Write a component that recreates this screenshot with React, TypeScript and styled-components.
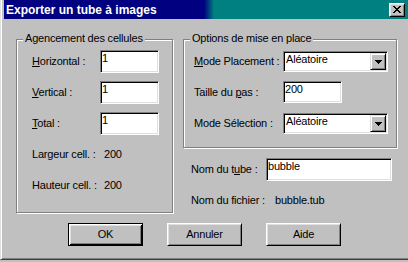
import styled, { createGlobalStyle } from "styled-components";

const GlobalStyle = createGlobalStyle`
  html, body {
    margin: 0;
    padding: 0;
    background: #c0c0c0;
    overflow: hidden;
  }
  body {
    font-family: "Liberation Sans", Arial, sans-serif;
    font-size: 11px;
    line-height: 13px;
    letter-spacing: -0.2px;
    color: #000;
  }
`;

const Window = styled.div`
  width: 408px;
  height: 260px;
  box-sizing: border-box;
  padding-left: 3px;
  background: #c0c0c0;
  border-left: 1px solid #dfdfdf;
  border-bottom: 1px solid #404040;
  box-shadow: inset 1px 0 0 #fff, inset 0 -1px 0 #808080;
`;

const TitleBar = styled.div`
  height: 19px;
  padding: 0 3px 0 2px;
  display: flex;
  align-items: center;
  justify-content: space-between;
  background: linear-gradient(
    90deg,
    #000080 0,
    #000080 200px,
    #004080 205px,
    #008080 210px
  );
`;

const TitleText = styled.span`
  padding-top: 1px;
  color: #fff;
  font-weight: bold;
  font-size: 12px;
  line-height: 14px;
  letter-spacing: 0;
`;

const CloseButton = styled.div`
  width: 16px;
  height: 14px;
  box-sizing: border-box;
  display: flex;
  align-items: center;
  justify-content: center;
  padding: 0 1px 1px 0;
  background: #c0c0c0;
  border: 1px solid;
  border-color: #fff #000 #000 #fff;
  box-shadow: inset 1px 1px 0 #dfdfdf, inset -1px -1px 0 #808080;
`;

const Body = styled.div`
  padding: 20px 0 0 12px;
`;

const Columns = styled.div`
  display: flex;
  align-items: flex-start;
  gap: 10px;
`;

const RightColumn = styled.div`
  display: flex;
  flex-direction: column;
`;

const GroupBox = styled.div<{ $w: number; $h: number }>`
  position: relative;
  box-sizing: border-box;
  width: ${(p) => p.$w}px;
  height: ${(p) => p.$h}px;
  border: 1px solid #808080;
  box-shadow: inset 1px 1px 0 #fff, 1px 1px 0 #fff;
`;

const Legend = styled.span`
  position: absolute;
  top: -8px;
  left: 6px;
  padding: 0 2px;
  background: #c0c0c0;
  white-space: nowrap;
`;

const FormGrid = styled.div<{ $cols: string; $pad: number }>`
  display: grid;
  grid-template-columns: ${(p) => p.$cols};
  grid-auto-rows: 23px;
  row-gap: 8px;
  padding: 10px 0 0 ${(p) => p.$pad}px;
`;

const Label = styled.span`
  display: flex;
  align-items: center;
  white-space: pre;
  padding-bottom: 1px;
`;

const Value = styled.span`
  display: flex;
  align-items: center;
  padding-left: 4px;
  padding-bottom: 1px;
`;

const Edit = styled.div<{ $w: number; $h?: number }>`
  box-sizing: border-box;
  width: ${(p) => p.$w}px;
  height: ${(p) => p.$h ?? 23}px;
  padding: 1px;
  background: #fff;
  border: 1px solid;
  border-color: #808080 #fff #fff #808080;
  box-shadow: inset 1px 1px 0 #000, inset -1px -1px 0 #dfdfdf;
  white-space: nowrap;
`;

const Combo = styled.div`
  box-sizing: border-box;
  width: 105px;
  height: 21px;
  align-self: center;
  display: flex;
  justify-content: space-between;
  padding: 1px;
  background: #fff;
  border: 1px solid;
  border-color: #808080 #fff #fff #808080;
  box-shadow: inset 1px 1px 0 #000, inset -1px -1px 0 #dfdfdf;
`;

const ComboText = styled.span`
  padding-left: 1px;
`;

const DropButton = styled.div`
  width: 16px;
  height: 17px;
  box-sizing: border-box;
  display: flex;
  align-items: center;
  justify-content: center;
  background: #c0c0c0;
  border: 1px solid;
  border-color: #dfdfdf #000 #000 #dfdfdf;
  box-shadow: inset 1px 1px 0 #fff, inset -1px -1px 0 #808080;
`;

const FieldRow = styled.div<{ $cols: string; $top: number }>`
  display: grid;
  grid-template-columns: ${(p) => p.$cols};
  height: 23px;
  margin-top: ${(p) => p.$top}px;
  padding-left: 8px;
`;

const PlainValue = styled.span`
  display: flex;
  align-items: center;
`;

const ButtonRow = styled.div`
  display: flex;
  gap: 24px;
  margin-top: 10px;
  padding-left: 52px;
`;

const Button = styled.div<{ $default?: boolean }>`
  width: 75px;
  height: 23px;
  box-sizing: border-box;
  display: flex;
  align-items: center;
  justify-content: center;
  background: #c0c0c0;
  border: 1px solid;
  border-color: ${(p) => (p.$default ? "#000" : "#fff #000 #000 #fff")};
  box-shadow: ${(p) =>
    p.$default
      ? "inset 1px 1px 0 #fff, inset -1px -1px 0 #000, inset 2px 2px 0 #dfdfdf, inset -2px -2px 0 #808080"
      : "inset 1px 1px 0 #dfdfdf, inset -1px -1px 0 #808080"};
`;

const CloseGlyph = () => (
  <svg width="8" height="7" viewBox="0 0 8 7" shapeRendering="crispEdges">
    <path
      fill="#000"
      d="M0 0h2v1H0zM6 0h2v1H6zM1 1h2v1H1zM5 1h2v1H5zM2 2h4v1H2zM3 3h2v1H3zM2 4h4v1H2zM1 5h2v1H1zM5 5h2v1H5zM0 6h2v1H0zM6 6h2v1H6z"
    />
  </svg>
);

const DownArrow = () => (
  <svg width="7" height="4" viewBox="0 0 7 4" shapeRendering="crispEdges">
    <path fill="#000" d="M0 0h7v1H0zM1 1h5v1H1zM2 2h3v1H2zM3 3h1v1H3z" />
  </svg>
);

const App = () => (
  <>
    <GlobalStyle />
    <Window>
      <TitleBar>
        <TitleText>Exporter un tube à images</TitleText>
        <CloseButton>
          <CloseGlyph />
        </CloseButton>
      </TitleBar>
      <Body>
        <Columns>
          <GroupBox $w={157} $h={174}>
            <Legend>Agencement des cellules</Legend>
            <FormGrid $cols="68px 59px" $pad={15}>
              <Label>
                <span>
                  <u>H</u>orizontal :
                </span>
              </Label>
              <Edit $w={59}>1</Edit>
              <Label>
                <span>
                  <u>V</u>ertical :
                </span>
              </Label>
              <Edit $w={59}>1</Edit>
              <Label>
                <span>
                  <u>T</u>otal :
                </span>
              </Label>
              <Edit $w={59}>1</Edit>
              <Label>Largeur cell. :</Label>
              <Value>200</Value>
              <Label>Hauteur cell. :</Label>
              <Value>200</Value>
            </FormGrid>
          </GroupBox>
          <RightColumn>
            <GroupBox $w={214} $h={109}>
              <Legend>Options de mise en place</Legend>
              <FormGrid $cols="89px 105px" $pad={10}>
                <Label>
                  <span>
                    <u>M</u>ode Placement :
                  </span>
                </Label>
                <Combo>
                  <ComboText>Aléatoire</ComboText>
                  <DropButton>
                    <DownArrow />
                  </DropButton>
                </Combo>
                <Label>
                  <span>
                    Taille du <u>p</u>as :
                  </span>
                </Label>
                <Edit $w={59} $h={22}>
                  200
                </Edit>
                <Label>Mode Sélection :</Label>
                <Combo>
                  <ComboText>Aléatoire</ComboText>
                  <DropButton>
                    <DownArrow />
                  </DropButton>
                </Combo>
              </FormGrid>
            </GroupBox>
            <FieldRow $cols="75px 126px" $top={10}>
              <Label>
                <span>
                  Nom du t<u>u</u>be :
                </span>
              </Label>
              <Edit $w={126}>bubble</Edit>
            </FieldRow>
            <FieldRow $cols="84px auto" $top={8}>
              <Label>Nom du fichier :</Label>
              <PlainValue>bubble.tub</PlainValue>
            </FieldRow>
          </RightColumn>
        </Columns>
        <ButtonRow>
          <Button $default>OK</Button>
          <Button>Annuler</Button>
          <Button>Aide</Button>
        </ButtonRow>
      </Body>
    </Window>
  </>
);

export default App;
